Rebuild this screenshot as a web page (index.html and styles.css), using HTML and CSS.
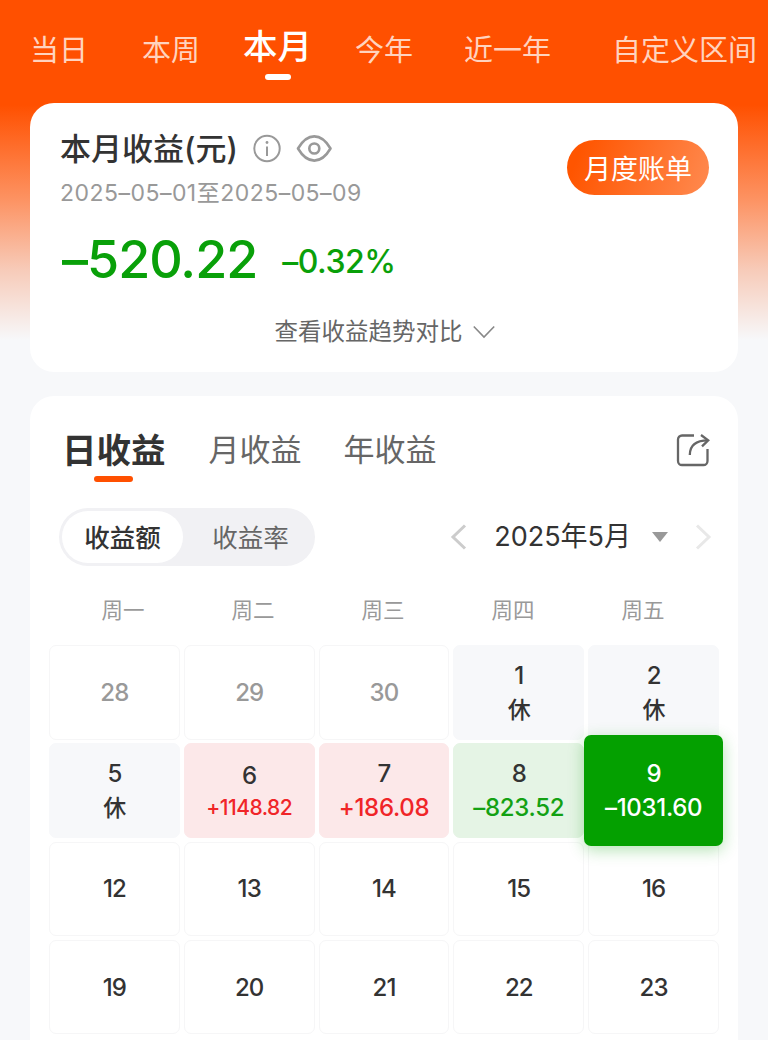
FILE: index.html
```html
<!DOCTYPE html>
<html lang="zh-CN">
<head>
    <meta charset="UTF-8">
    <meta name="viewport" content="width=device-width, initial-scale=1.0">
    <title>收益日历</title>
    <link rel="stylesheet" href="styles.css">
</head>
<body>

<nav class="range-tabs">
    <span class="range range-day">当日</span>
    <span class="range range-week">本周</span>
    <span class="range range-month active">本月</span>
    <span class="range range-this-year">今年</span>
    <span class="range range-year">近一年</span>
    <span class="range range-custom">自定义区间</span>
</nav>

<section class="card summary">
    <div class="summary-top">
        <div>
            <div class="summary-title">
                <h1>本月收益(元)</h1>
                <svg class="icon-info" width="30" height="30" viewBox="0 0 30 30" fill="none" stroke="#999" stroke-width="2">
                    <circle cx="15" cy="14.500" r="12.700"/>
                    <path d="M15 12.500V22"/>
                    <circle cx="15" cy="8.500" r="1.400" fill="#999" stroke="none"/>
                </svg>
                <svg class="icon-eye" width="36" height="30" viewBox="0 0 36 30" fill="none" stroke="#999" stroke-width="2.6">
                    <path d="M2 14.500C7 6 12.500 2.400 18.300 2.400S29.500 6 34.500 14.500C29.500 23 24 26.600 18.300 26.600S7 23 2 14.500z" stroke-linejoin="round"/>
                    <circle cx="18.300" cy="14.500" r="5"/>
                </svg>
            </div>
            <div class="summary-dates">2025–05–01至2025–05–09</div>
        </div>
        <button class="bill-button">月度账单</button>
    </div>
    <div class="summary-amount">
        <span class="amount">–520.22</span>
        <span class="rate">–0.32%</span>
    </div>
    <div class="summary-more">
        <span>查看收益趋势对比</span>
        <svg width="22" height="14" viewBox="0 0 22 14" fill="none" stroke="#888" stroke-width="1.6">
            <path d="M.8 1.500L11 12 21.200 1.500"/>
        </svg>
    </div>
</section>

<section class="card profit">
    <div class="profit-tabs">
        <span class="profit-tab active">日收益</span>
        <span class="profit-tab">月收益</span>
        <span class="profit-tab">年收益</span>
        <svg class="icon-share" width="34" height="34" viewBox="0 0 34 34" fill="none" stroke="#666" stroke-width="2.300">
            <path d="M18 2.500H6a4 4 0 0 0-4 4V28a4 4 0 0 0 4 4h21.500a4 4 0 0 0 4-4V16"/>
            <path d="M13.800 22C13.800 13 19 7.300 32 7.300"/>
            <path d="M25 2l7.200 5.300L26 13.300"/>
        </svg>
    </div>

    <div class="controls">
        <div class="switch">
            <span class="switch-item active">收益额</span>
            <span class="switch-item">收益率</span>
        </div>
        <div class="month-picker">
            <svg width="17" height="26" viewBox="0 0 17 26" fill="none" stroke="#ccc" stroke-width="3">
                <path d="M15 1.500L3 13l12 11.500"/>
            </svg>
            <span class="month">2025年5月</span>
            <span class="caret"></span>
            <svg width="17" height="26" viewBox="0 0 17 26" fill="none" stroke="#e8e8e8" stroke-width="3">
                <path d="M2 1.500L14 13 2 24.500"/>
            </svg>
        </div>
    </div>

    <div class="weekdays">
        <span>周一</span>
        <span>周二</span>
        <span>周三</span>
        <span>周四</span>
        <span>周五</span>
    </div>

    <div class="calendar">
        <div class="day other">28</div>
        <div class="day other">29</div>
        <div class="day other">30</div>
        <div class="day rest">1<span class="note">休</span></div>
        <div class="day rest">2<span class="note">休</span></div>
        <div class="day rest">5<span class="note">休</span></div>
        <div class="day up">6<span class="value small">+1148.82</span></div>
        <div class="day up">7<span class="value">+186.08</span></div>
        <div class="day down">8<span class="value">–823.52</span></div>
        <div class="day selected">9<span class="value">–1031.60</span></div>
        <div class="day">12</div>
        <div class="day">13</div>
        <div class="day">14</div>
        <div class="day">15</div>
        <div class="day">16</div>
        <div class="day">19</div>
        <div class="day">20</div>
        <div class="day">21</div>
        <div class="day">22</div>
        <div class="day">23</div>
    </div>
</section>

</body>
</html>
```
FILE: styles.css
```css
* {
    box-sizing: border-box;
}
body {
    margin: 0;
    height: 1040px;
    overflow: hidden;
    font-family: Inter, "Noto Sans CJK SC", sans-serif;
    color: #333;
    background: #f7f8fa linear-gradient(#ff5000 0, #ff5000 105px, #fd9363 200px, #f7cbb9 270px, #f7f8fa 340px) no-repeat 0 0 / 100% 340px;
}
.range-tabs {
    display: flex;
    height: 103px;
    padding-left: 30px;
    white-space: nowrap;
}
.range {
    font-size: 29px;
    line-height: 102px;
    color: #ffd3bf;
}
.range-week {
    margin-left: 54px;
}
.range-month {
    margin-left: 43px;
}
.range-this-year {
    margin-left: 43px;
}
.range-year {
    margin-left: 51px;
}
.range-custom {
    margin-left: 61px;
}
.range.active {
    display: flex;
    flex-direction: column;
    align-items: center;
    font-size: 34.500px;
    font-weight: 500;
    line-height: 93px;
    color: #fff;
}
.range.active::after {
    content: "";
    width: 26px;
    height: 6px;
    margin-top: -19px;
    border-radius: 3px;
    background: #fff;
}
.card {
    margin: 0 30px;
    background: #fff;
    border-radius: 24px;
}
.summary {
    height: 269px;
    padding: 27px 29px 0 30px;
}
.summary-top {
    display: flex;
    justify-content: space-between;
    align-items: flex-start;
}
.summary-title {
    display: flex;
    align-items: center;
    height: 38px;
}
h1 {
    margin: 0;
    font-size: 31px;
    font-weight: 500;
    line-height: 38px;
}
.icon-info {
    margin-left: 14px;
}
.icon-eye {
    margin-left: 14px;
}
.summary-dates {
    margin-top: 8px;
    font-size: 23px;
    line-height: 34px;
    letter-spacing: 0.480px;
    color: #999;
}
.bill-button {
    width: 142px;
    height: 55px;
    margin-top: 10px;
    padding: 0;
    border: none;
    border-radius: 28px;
    font-family: inherit;
    font-size: 27px;
    color: #fff;
    background: linear-gradient(110deg, #ff5500 10%, #ff8a50);
}
.summary-amount {
    display: flex;
    align-items: center;
    margin-top: 18px;
    padding-left: 2px;
    line-height: 64px;
    color: #09a009;
}
.amount {
    font-size: 52px;
    font-weight: 500;
    letter-spacing: -1px;
}
.rate {
    margin: 4px 0 0 25px;
    font-size: 32px;
    font-weight: 500;
    letter-spacing: -0.500px;
    line-height: 60px;
}
.summary-more {
    display: flex;
    justify-content: center;
    align-items: center;
    gap: 10px;
    margin-top: 24px;
    font-size: 23.500px;
    line-height: 32px;
    color: #666;
}
.profit {
    height: 680px;
    margin-top: 24px;
    padding-top: 24px;
}
.profit-tabs {
    display: flex;
    height: 64px;
    padding: 0 28px 0 32px;
}
.profit-tab {
    margin-right: 43px;
    font-size: 31px;
    line-height: 60px;
    color: #666;
}
.profit-tab + .profit-tab {
    margin-right: 42px;
}
.profit-tab.active {
    display: flex;
    flex-direction: column;
    align-items: center;
    font-size: 34.500px;
    font-weight: 700;
    line-height: 61px;
    color: #333;
}
.profit-tab.active::after {
    content: "";
    width: 39px;
    height: 6px;
    margin-top: -5px;
    border-radius: 3px;
    background: #ff5000;
}
.icon-share {
    margin: 13px 0 0 auto;
}
.controls {
    display: flex;
    justify-content: space-between;
    height: 58px;
    margin-top: 24px;
    padding: 0 26px 0 29px;
}
.switch {
    display: flex;
    width: 256px;
    height: 58px;
    padding: 3px;
    border-radius: 29px;
    background: #f1f1f4;
}
.switch-item {
    width: 121px;
    border-radius: 26px;
    font-size: 25.500px;
    line-height: 53px;
    text-align: center;
    color: #666;
}
.switch-item + .switch-item {
    margin-left: 7px;
}
.switch-item.active {
    font-weight: 500;
    color: #333;
    background: #fff;
}
.month-picker {
    display: flex;
    align-items: center;
}
.month {
    margin-left: 27px;
    font-size: 27px;
    line-height: 58px;
}
.caret {
    margin: 0 27px 0 21px;
    border: 8px solid transparent;
    border-top: 10px solid #999;
    border-bottom: none;
}
.weekdays {
    display: grid;
    grid-template-columns: repeat(5, 130px);
    margin: 28px 0 0 28px;
    font-size: 21.500px;
    line-height: 32px;
    text-align: center;
    color: #999;
}
.calendar {
    display: grid;
    grid-template-columns: repeat(5, 1fr);
    grid-auto-rows: 94.600px;
    gap: 3.700px 4px;
    margin: 19px 19px 0;
}
.day {
    display: flex;
    flex-direction: column;
    justify-content: center;
    align-items: center;
    padding-top: 1px;
    border: 1.500px solid #f6f6f7;
    border-radius: 7px;
    font-size: 24px;
    font-weight: 500;
    letter-spacing: -0.900px;
    line-height: 34px;
}
.other {
    color: #999;
}
.rest {
    border-color: #f7f8fa;
    background: #f7f8fa;
}
.note {
    font-size: 23px;
}
.value {
    letter-spacing: -0.300px;
}
.value.small {
    font-size: 21px;
    letter-spacing: -0.500px;
    line-height: 30px;
}
.up {
    border-color: #fce8e9;
    background: #fce8e9;
}
.up .value {
    color: #f02528;
}
.down {
    border-color: #e5f4e5;
    background: #e5f4e5;
}
.down .value {
    color: #13a113;
}
.day.selected {
    position: relative;
    z-index: 1;
    margin: -8px -4px;
    border: none;
    color: #fff;
    background: #04a000;
    box-shadow: 0 4px 16px rgba(4, 160, 0, 0.3);
}
```
